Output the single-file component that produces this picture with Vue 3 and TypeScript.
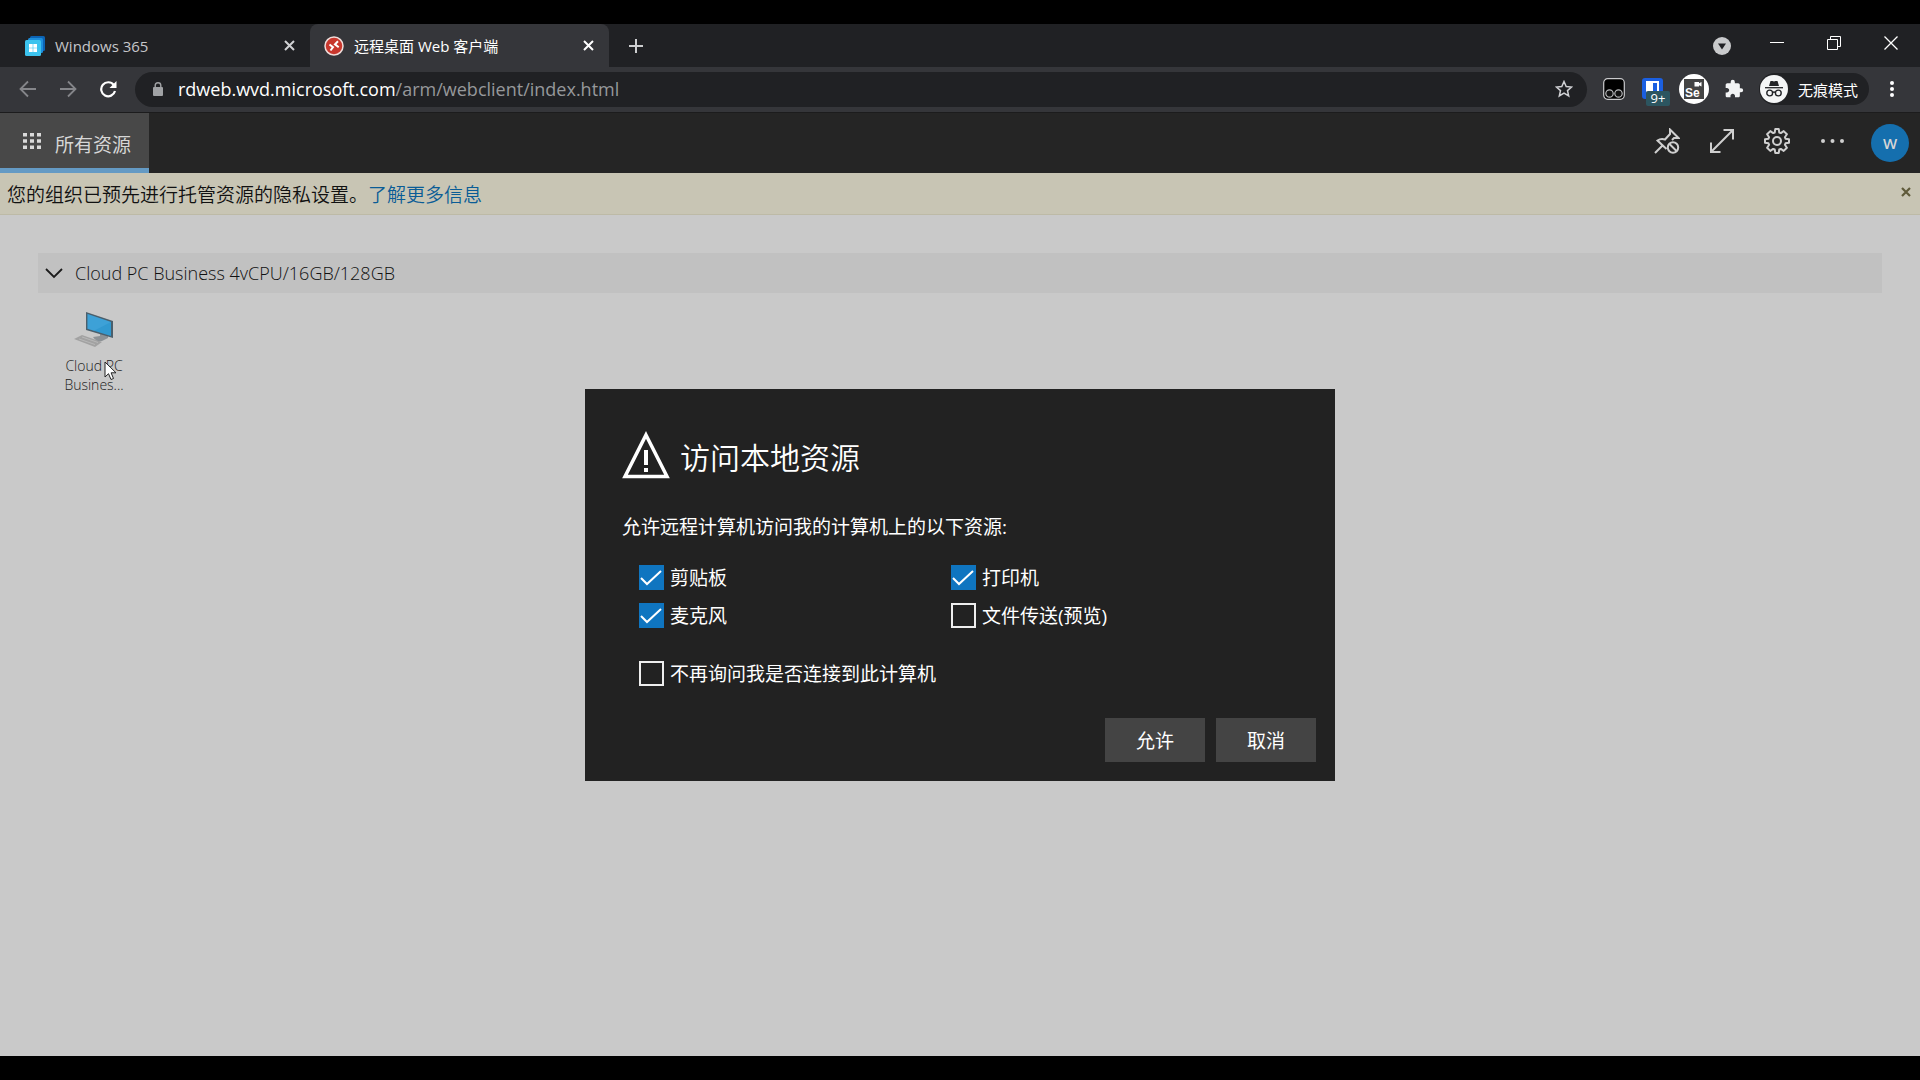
<script setup lang="ts">
import { reactive, ref } from 'vue'

interface Resource {
  id: string
  label: string
  checked: boolean
}

const resources = reactive<Resource[]>([
  { id: 'clipboard', label: '剪贴板', checked: true },
  { id: 'printer', label: '打印机', checked: true },
  { id: 'microphone', label: '麦克风', checked: true },
  { id: 'files', label: '文件传送(预览)', checked: false },
])
const dontAsk = ref(false)
const path = '/arm/webclient/index.html'
</script>

<template>
  <div class="screen">
    <header class="tabs">
      <div class="tab">
        <svg class="favicon" viewBox="0 0 20 20">
          <rect x="5" y="0" width="15" height="15" rx="1.5" fill="#0c63b4" />
          <rect x="3" y="2" width="15" height="15" rx="1.5" fill="#1c8fdc" />
          <rect x="0" y="4" width="16" height="16" rx="1.5" fill="#3cc3ee" />
          <path d="M4 8h3.700v3.700H4zM8.300 8H12v3.700H8.300zM4 12.300h3.700V16H4zM8.300 12.300H12V16H8.300z" fill="#fff" />
        </svg>
        <span class="tab-title">Windows 365</span>
        <button class="icon-btn close" aria-label="关闭标签页">
          <svg width="11" height="11" viewBox="0 0 11 11"><path d="M1 1l9 9M10 1l-9 9" stroke="#d0d1d4" stroke-width="2" /></svg>
        </button>
      </div>
      <div class="tab active">
        <svg class="favicon" viewBox="0 0 20 20">
          <circle cx="10" cy="10" r="9" fill="#c8372d" stroke="#f0dcd9" stroke-width="1.5" />
          <path d="M5.500 8.500l3.500 2.700L6.500 14.500M14 5.200L11 8.300l3.700 2.900" fill="none" stroke="#fff" stroke-width="2" />
        </svg>
        <span class="tab-title">远程桌面 Web 客户端</span>
        <button class="icon-btn close" aria-label="关闭标签页">
          <svg width="11" height="11" viewBox="0 0 11 11"><path d="M1 1l9 9M10 1l-9 9" stroke="#fff" stroke-width="2" /></svg>
        </button>
      </div>
      <button class="icon-btn new-tab" aria-label="新标签页">
        <svg width="16" height="16" viewBox="0 0 16 16"><path d="M8 1v14M1 8h14" stroke="#cdced0" stroke-width="2" /></svg>
      </button>
      <div class="window-controls">
        <button class="icon-btn search-tabs" aria-label="搜索标签页">
          <svg width="18" height="18" viewBox="0 0 18 18"><circle cx="9" cy="9" r="9" fill="#c9cacc" /><path d="M5 6.500h8L9 12.500z" fill="#202124" /></svg>
        </button>
        <button class="icon-btn" aria-label="最小化">
          <svg width="14" height="14" viewBox="0 0 14 14"><path d="M0 6.500h14" stroke="#fff" /></svg>
        </button>
        <button class="icon-btn" aria-label="还原">
          <svg width="14" height="14" viewBox="0 0 14 14" fill="none" stroke="#fff"><path d="M.5 3.500h10v10H.5zM3.500 3V.5h10v10H11" /></svg>
        </button>
        <button class="icon-btn" aria-label="关闭">
          <svg width="14" height="14" viewBox="0 0 14 14"><path d="M.5.5l13 13M13.500.5l-13 13" stroke="#fff" stroke-width="1.300" /></svg>
        </button>
      </div>
    </header>

    <nav class="toolbar">
      <div class="nav-buttons">
        <button class="icon-btn" aria-label="后退">
          <svg width="18" height="18" viewBox="0 0 18 18" fill="none" stroke="#85868a" stroke-width="1.800"><path d="M17 9H2M9 1.500L1.500 9 9 16.500" /></svg>
        </button>
        <button class="icon-btn" aria-label="前进">
          <svg width="18" height="18" viewBox="0 0 18 18" fill="none" stroke="#85868a" stroke-width="1.800"><path d="M1 9h15M9 1.500L16.500 9 9 16.500" /></svg>
        </button>
        <button class="icon-btn" aria-label="重新加载">
          <svg width="18" height="18" viewBox="0 0 18 18"><path d="M14.800 5A7 7 0 1 0 16 11" fill="none" stroke="#fff" stroke-width="2.200" /><path d="M17.500 1v7h-7z" fill="#fff" /></svg>
        </button>
      </div>
      <div class="omnibox">
        <svg width="10" height="14" viewBox="0 0 10 14"><rect y="5" width="10" height="9" rx="1" fill="#a0a2a5" /><path d="M2.200 6V3.500a2.800 2.800 0 0 1 5.600 0V6" fill="none" stroke="#a0a2a5" stroke-width="1.400" /></svg>
        <span class="url">rdweb.wvd.microsoft.com<span class="path">{{ path }}</span></span>
        <button class="icon-btn" aria-label="添加书签">
          <svg width="18" height="18" viewBox="0 0 18 18"><path d="M9 1.500l2.200 5 5.400.5-4.100 3.600 1.200 5.400L9 13.200 4.300 16l1.200-5.400L1.400 7l5.400-.5z" fill="none" stroke="#d0d1d4" stroke-width="1.500" /></svg>
        </button>
      </div>
      <div class="extensions">
        <svg width="22" height="22" viewBox="0 0 22 22">
          <rect x=".7" y=".7" width="20.600" height="20.600" rx="4" fill="#000" stroke="#c9cacc" stroke-width="1.200" />
          <g fill="#111" stroke="#b8b9bb" stroke-width="1.200"><circle cx="6.500" cy="15.500" r="3.700" /><circle cx="15.500" cy="15.500" r="3.700" /></g>
        </svg>
        <span class="vault">
          <svg width="22" height="22" viewBox="0 0 22 22"><rect width="21" height="21" rx="3" fill="#1b5fe0" /><path d="M4 3h13v10q-1 4-6.500 7Q5 17 4 13z" fill="#fff" /><path d="M11 5h4v8q-1 2.500-4 4.500z" fill="#1b5fe0" /></svg>
          <span class="badge">9+</span>
        </span>
        <svg width="30" height="30" viewBox="0 0 30 30">
          <circle cx="15" cy="15" r="15" fill="#fff" />
          <rect x="5" y="5" width="20" height="20" fill="#444" />
          <path d="M15.500 8h4.500v1.300l2.500-1.300v4.500L20 11.200v1.300h-4.500z" fill="#fff" />
          <text x="6" y="23" font-size="12" font-weight="700" fill="#fff" font-family="Liberation Sans, sans-serif">Se</text>
        </svg>
        <svg width="20" height="20" viewBox="0 0 24 24"><path fill="#f2f3f4" d="M20.500 11H19V7c0-1.100-.9-2-2-2h-4V3.500a2.500 2.500 0 0 0-5 0V5H4c-1.100 0-1.990.9-1.990 2v3.800H3.500c1.490 0 2.700 1.210 2.700 2.700s-1.210 2.700-2.700 2.700H2V20c0 1.100.9 2 2 2h3.800v-1.500c0-1.490 1.210-2.700 2.700-2.700s2.700 1.210 2.700 2.700V22H17c1.100 0 2-.9 2-2v-4h1.500a2.500 2.500 0 0 0 0-5z" /></svg>
        <button class="incognito">
          <svg width="28" height="28" viewBox="0 0 28 28">
            <circle cx="14" cy="14" r="14" fill="#f4f5f6" />
            <path d="M9 11l1.500-5h2l1.500.6 1.500-.6h2L19 11z" fill="#222327" />
            <path d="M5 12.700h18" stroke="#222327" stroke-width="1.300" />
            <g fill="none" stroke="#222327" stroke-width="1.400"><circle cx="9.700" cy="18" r="2.900" /><circle cx="18.300" cy="18" r="2.900" /><path d="M12.500 17.500q1.500-1 3 0" /></g>
          </svg>
          <span>无痕模式</span>
        </button>
        <button class="icon-btn menu" aria-label="菜单">
          <svg width="4" height="18" viewBox="0 0 4 18" fill="#fff"><circle cx="2" cy="3" r="2" /><circle cx="2" cy="9" r="2" /><circle cx="2" cy="15" r="2" /></svg>
        </button>
      </div>
    </nav>

    <div class="app">
      <div class="app-bar">
        <a class="app-tab" href="#">
          <svg width="18" height="16" viewBox="0 0 18 16" fill="#dadada"><path d="M0 0h4v3.500H0zM7 0h4v3.500H7zM14 0h4v3.500h-4zM0 6.300h4v3.500H0zM7 6.300h4v3.500H7zM14 6.300h4v3.500h-4zM0 12.500h4V16H0zM7 12.500h4V16H7zM14 12.500h4V16h-4z" /></svg>
          <span>所有资源</span>
        </a>
        <div class="app-actions">
          <div class="action-icons">
            <button class="icon-btn" aria-label="固定">
              <svg width="26" height="26" viewBox="0 0 26 26" fill="none" stroke="#cfcfcf" stroke-width="2">
                <path d="M1 25l8-8M12.500 21L3.500 12.500q3.500-2.500 7.500-1L16 6V1.500L24.500 10H20l-2 2" />
                <circle cx="19" cy="19.500" r="5.200" /><path d="M15.500 16l7 7" />
              </svg>
            </button>
            <button class="icon-btn" aria-label="全屏">
              <svg width="26" height="26" viewBox="0 0 26 26" fill="none" stroke="#cfcfcf" stroke-width="2"><path d="M3 23L23 3M14.500 2H24v9.500M2 14.500V24h9.500" /></svg>
            </button>
            <button class="icon-btn" aria-label="设置">
              <svg width="26" height="26" viewBox="0 0 26 26" fill="none" stroke="#cfcfcf" stroke-width="2">
                <path stroke-linejoin="round" d="M10.700 4.500L11.300 1h3.400l.6 3.500 1.500.6L19.700 3.100l3.200 3.200-2 2.900.6 1.500 3.500.6v3.400l-3.500.6-.6 1.500 2 2.900-3.200 3.200-2.900-2-1.500.6-.6 3.500h-3.400l-.6-3.500-1.500-.6-2.900 2-3.200-3.200 2-2.900-.6-1.500L1 14.700v-3.400l3.500-.6.6-1.500-2-2.900 3.200-3.200 2.900 2z" />
                <circle cx="13" cy="13" r="4" />
              </svg>
            </button>
            <button class="icon-btn" aria-label="更多">
              <svg width="26" height="26" viewBox="0 0 26 26" fill="#cfcfcf"><circle cx="4" cy="13" r="2" /><circle cx="13.500" cy="13" r="2" /><circle cx="23" cy="13" r="2" /></svg>
            </button>
          </div>
          <button class="avatar">W</button>
        </div>
      </div>

      <div class="notice">
        <p>您的组织已预先进行托管资源的隐私设置。<a href="#">了解更多信息</a></p>
        <button class="icon-btn" aria-label="关闭通知">
          <svg width="10" height="10" viewBox="0 0 10 10"><path d="M1 1l8 8M9 1L1 9" stroke="#5f5a3a" stroke-width="2.200" /></svg>
        </button>
      </div>

      <main class="workspace">
        <h2 class="group">
          <svg width="18" height="12" viewBox="0 0 18 12"><path d="M1 2l8 8 8-8" fill="none" stroke="#1c1c1c" stroke-width="1.800" /></svg>
          Cloud PC Business 4vCPU/16GB/128GB
        </h2>
        <a class="tile" href="#">
          <svg width="40" height="36" viewBox="0 0 40 36">
            <path d="M0 27l8-4 20 7-7 5z" fill="#a2a2a2" />
            <path d="M5 27l16 5.500M8 25l16 5.500" stroke="#b8b8b8" />
            <path d="M19 25q3 5 9 4l6-3v-4l-8-1v3z" fill="#8d9296" />
            <path d="M12 0l27 9v17L12 18z" fill="#4b5f6c" />
            <path d="M13.500 2L37 10v14L13.500 16.800z" fill="#3199d0" />
            <path d="M13.500 2L37 10 20 18.800l-6.500-2z" fill="#50ade0" opacity=".4" />
          </svg>
          <span>Cloud PC<br>Busines...</span>
          <svg class="cursor" width="13" height="20" viewBox="0 0 13 20"><path d="M1 1v15l3.500-3.300L7 18.500l2.500-1-2.400-5.700H12z" fill="#fff" stroke="#222" /></svg>
        </a>
      </main>

      <div class="overlay">
        <form class="dialog" role="dialog" aria-labelledby="dialog-title" @submit.prevent>
          <div class="dialog-head">
            <svg width="48" height="48" viewBox="0 0 48 48"><path d="M24 4l21 41.500H3z" fill="none" stroke="#fff" stroke-width="3.500" /><path d="M22 19h4v15h-4zM22 37h4v4h-4z" fill="#fff" /></svg>
            <h1 id="dialog-title">访问本地资源</h1>
          </div>
          <p>允许远程计算机访问我的计算机上的以下资源:</p>
          <div class="options">
            <label v-for="item in resources" :key="item.id" class="check">
              <input v-model="item.checked" type="checkbox">
              <span>{{ item.label }}</span>
            </label>
          </div>
          <label class="check remember">
            <input v-model="dontAsk" type="checkbox">
            <span>不再询问我是否连接到此计算机</span>
          </label>
          <div class="dialog-actions">
            <button type="submit">允许</button>
            <button type="button">取消</button>
          </div>
        </form>
      </div>
    </div>
  </div>
</template>

<style>
body {
  margin: 0;
  background: #000;
}
</style>

<style scoped>
.screen {
  box-sizing: border-box;
  min-height: 100vh;
  padding: 24px 0;
  display: flex;
  flex-direction: column;
  font-family: "Open Sans", "Noto Sans CJK SC", sans-serif;
}
svg {
  display: block;
  flex: none;
}
button {
  font: inherit;
  color: inherit;
  border: 0;
  padding: 0;
  background: none;
}
.icon-btn {
  display: flex;
  align-items: center;
  justify-content: center;
  flex: none;
}

.tabs {
  display: flex;
  height: 43px;
  background: #202124;
  color: #c6c7ca;
  font-size: 15px;
}
.tab {
  box-sizing: border-box;
  display: flex;
  align-items: center;
  width: 310px;
  padding: 0 15px 0 25px;
  gap: 10px;
}
.tab.active {
  width: 299px;
  padding-left: 14px;
  background: #35363a;
  color: #fff;
  border-radius: 8px 8px 0 0;
}
.favicon {
  width: 20px;
  height: 20px;
}
.tab-title {
  flex: 1;
  white-space: nowrap;
}
.new-tab {
  width: 54px;
}
.window-controls {
  display: flex;
  align-items: center;
  gap: 43px;
  margin-left: auto;
  padding: 0 22px 6px 0;
}
.search-tabs {
  margin: 6px -4px 0 0;
}

.toolbar {
  box-sizing: border-box;
  display: flex;
  align-items: center;
  height: 46px;
  padding-bottom: 1px;
  background: #35363a;
  border-bottom: 1px solid #1c1c1d;
}
.nav-buttons {
  display: flex;
  gap: 22px;
  padding: 0 18px 0 19px;
}
.omnibox {
  flex: 1;
  display: flex;
  align-items: center;
  height: 35px;
  box-sizing: border-box;
  padding: 0 14px 0 18px;
  gap: 15px;
  border-radius: 18px;
  background: #202124;
  color: #fff;
  font-size: 18px;
}
.url {
  flex: 1;
}
.path {
  color: #96989b;
}
.extensions {
  display: flex;
  align-items: center;
  gap: 15px;
  padding: 0 26px 0 16px;
  color: #fff;
}
.vault {
  position: relative;
  margin-left: 2px;
}
.badge {
  position: absolute;
  left: 4px;
  top: 13px;
  width: 24px;
  border-radius: 2px;
  background: #2c5560;
  font-size: 13px;
  line-height: 15px;
  text-align: center;
}
.incognito {
  display: flex;
  align-items: center;
  gap: 10px;
  height: 32px;
  padding: 0 11px 0 1px;
  border-radius: 16px;
  background: #202124;
  font-size: 15px;
}
.menu {
  margin-left: 6px;
}

.app {
  position: relative;
  flex: 1;
  display: flex;
  flex-direction: column;
  background: #c9c9c9;
  font-size: 19px;
}
.app-bar {
  display: flex;
  justify-content: space-between;
  height: 60px;
  background: #252525;
  color: #d6d6d6;
}
.app-tab {
  display: flex;
  align-items: center;
  gap: 14px;
  padding: 0 18px 0 23px;
  border-bottom: 5px solid #649ac4;
  background: #484848;
  color: inherit;
  text-decoration: none;
}
.app-tab span {
  padding-top: 6px;
}
.app-actions {
  display: flex;
  align-items: center;
  gap: 26px;
  padding-right: 11px;
}
.action-icons {
  display: flex;
  gap: 29px;
  padding-bottom: 4px;
}
.avatar {
  width: 38px;
  height: 38px;
  border-radius: 50%;
  background: #156fae;
  font-size: 15px;
  font-weight: 600;
}
.notice {
  display: flex;
  align-items: center;
  justify-content: space-between;
  box-sizing: border-box;
  height: 42px;
  padding: 0 9px 0 7px;
  border-bottom: 1px solid #bdbaa6;
  background: #c8c5b4;
  color: #111;
  font-weight: 350;
}
.notice p {
  margin: 0;
}
.notice a {
  color: #0a5c96;
  text-decoration: none;
}
.notice button {
  padding-bottom: 4px;
}
.workspace {
  padding: 38px;
}
.group {
  display: flex;
  align-items: center;
  gap: 12px;
  height: 40px;
  margin: 0;
  padding-left: 7px;
  background: #c1c1c1;
  color: #111;
  font-size: 18px;
  font-weight: 350;
}
.tile {
  position: relative;
  display: flex;
  flex-direction: column;
  align-items: center;
  gap: 8px;
  width: 112px;
  padding-top: 19px;
  color: #222;
  font-size: 14px;
  font-weight: 350;
  line-height: 19px;
  text-align: center;
  text-decoration: none;
}
.cursor {
  position: absolute;
  left: 66px;
  top: 68px;
}

.overlay {
  position: absolute;
  inset: 0;
  display: flex;
  align-items: center;
  justify-content: center;
}
.dialog {
  box-sizing: border-box;
  width: 750px;
  padding: 42px 19px 19px 37px;
  background: #222;
  color: #fff;
}
.dialog-head {
  display: flex;
  align-items: center;
  gap: 10px;
}
h1 {
  margin: 0;
  padding-top: 6px;
  font-size: 30px;
  line-height: 42px;
  font-weight: 350;
}
.dialog p {
  margin: 34px 0 24px;
  line-height: 28px;
}
.options {
  display: grid;
  grid-template-columns: 312px 1fr;
  row-gap: 13px;
  padding-left: 17px;
}
.check {
  display: flex;
  align-items: center;
  gap: 6px;
}
.check span {
  padding-top: 2px;
  line-height: 23px;
}
.remember {
  margin: 33px 0 32px 17px;
}
.check input {
  appearance: none;
  box-sizing: border-box;
  width: 25px;
  height: 25px;
  margin: 0;
  border: 2px solid #eee;
}
.check input:checked {
  border: 0;
  background: #0f75c0 url("data:image/svg+xml,%3Csvg xmlns='http://www.w3.org/2000/svg' viewBox='0 0 25 25'%3E%3Cpath d='M2 13l6 6L22 6' fill='none' stroke='white' stroke-width='2'/%3E%3C/svg%3E");
}
.dialog-actions {
  display: flex;
  justify-content: flex-end;
  gap: 11px;
}
.dialog-actions button {
  width: 100px;
  height: 44px;
  background: #444;
}
</style>
